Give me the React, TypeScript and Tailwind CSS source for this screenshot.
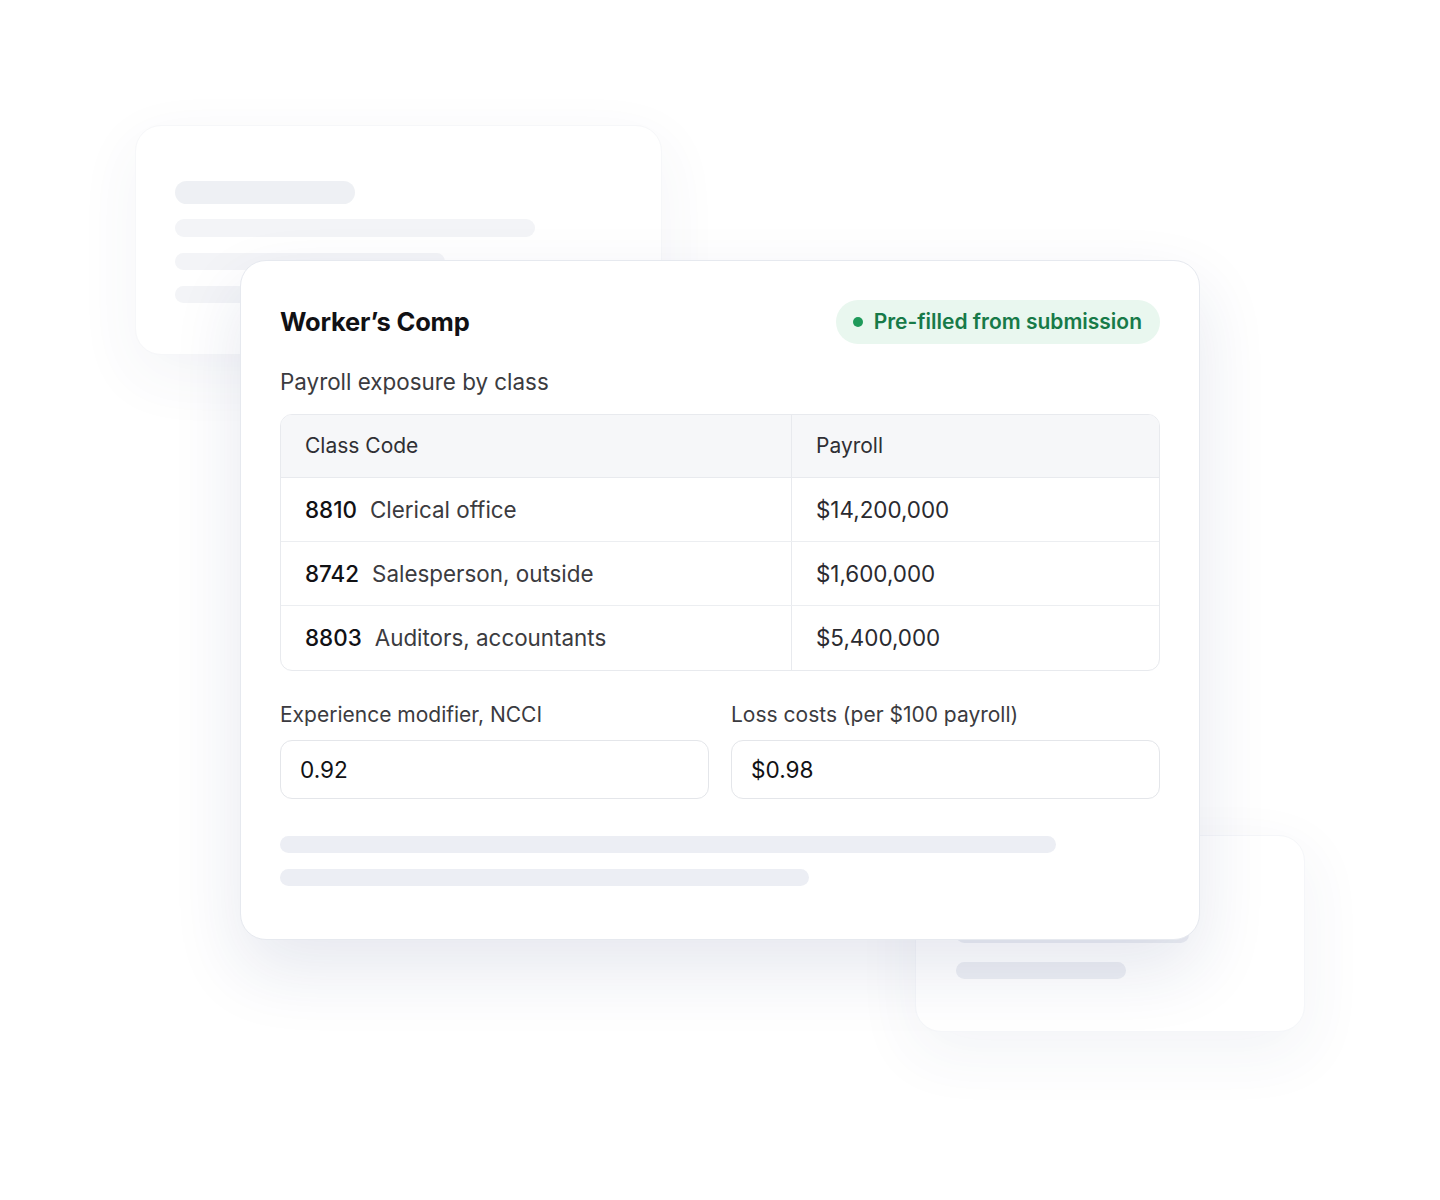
import React from "react";

const rows = [
  { code: "8810", name: "Clerical office", payroll: "$14,200,000" },
  { code: "8742", name: "Salesperson, outside", payroll: "$1,600,000" },
  { code: "8803", name: "Auditors, accountants", payroll: "$5,400,000" },
];

export default function App() {
  return (
    <div
      className="relative w-[1440px] h-[1200px] bg-white overflow-hidden"
      style={{ fontFamily: "Inter, 'Noto Sans', sans-serif" }}
    >
      {/* back card top-left */}
      <div className="absolute left-[135px] top-[125px] w-[527px] h-[230px] rounded-[26px] bg-white border border-[#f3f4f7] shadow-[0_20px_60px_rgba(40,60,120,0.07)] opacity-70 px-[39px] pt-[55px] flex flex-col">
        <div className="h-[23px] w-[180px] rounded-full bg-[#e8ebf0]" />
        <div className="mt-[15px] h-[18px] w-[360px] rounded-full bg-[#eef0f4]" />
        <div className="mt-[16px] h-[17px] w-[270px] rounded-full bg-[#eef0f4]" />
        <div className="mt-[16px] h-[17px] w-[200px] rounded-full bg-[#eef0f4]" />
      </div>

      {/* back card bottom-right */}
      <div className="absolute left-[915px] top-[835px] w-[390px] h-[197px] rounded-[26px] bg-white border border-[#f1f3f7] shadow-[0_20px_60px_rgba(40,60,120,0.08)] opacity-70 px-[40px] pt-[90px] flex flex-col">
        <div className="h-[17px] w-[233px] rounded-full bg-[#e6e9f0]" />
        <div className="mt-[19px] h-[17px] w-[170px] rounded-full bg-[#e6e9f0]" />
      </div>

      {/* main card */}
      <div className="absolute left-[240px] top-[260px] w-[960px] h-[680px] rounded-[26px] bg-white border border-[#e6e9ef] shadow-[0_30px_70px_rgba(30,50,110,0.11)] px-[39px] pt-[39px] flex flex-col">
        <div className="flex items-center justify-between h-[44px]">
          <h2 className="text-[25.5px] font-bold text-[#111114] tracking-[-0.2px]">Worker’s Comp</h2>
          <div className="h-[44px] rounded-full bg-[#e9f7ef] flex items-center pl-[17px] pr-[18px] gap-[11px]">
            <span className="w-[10px] h-[10px] rounded-full bg-[#1f9a5a]" />
            <span className="text-[21px] font-semibold text-[#177a48]">Pre-filled from submission</span>
          </div>
        </div>

        <div className="mt-[24px] text-[22.4px] leading-[28px] text-[#3b3b40]">Payroll exposure by class</div>

        <div className="mt-[18px] rounded-[12px] border border-[#e8eaee] overflow-hidden">
          <div className="flex h-[63px] bg-[#f6f7f9] border-b border-[#e8eaee] text-[21px] text-[#2f2f34]">
            <div className="w-[511px] border-r border-[#e8eaee] flex items-center pl-[24px]">Class Code</div>
            <div className="flex-1 flex items-center pl-[24px]">Payroll</div>
          </div>
          {rows.map((r, i) => (
            <div
              key={r.code}
              className={`flex h-[64px] text-[22.4px] ${i < rows.length - 1 ? "border-b border-[#eceef1]" : ""}`}
            >
              <div className="w-[511px] border-r border-[#e8eaee] flex items-center pl-[24px]">
                <span className="font-medium text-[#111114]">{r.code}</span>
                <span className="ml-[13px] text-[#3b3b40]">{r.name}</span>
              </div>
              <div className="flex-1 flex items-center pl-[24px] text-[#2a2a2f]">{r.payroll}</div>
            </div>
          ))}
        </div>

        <div className="mt-[30px] grid grid-cols-2 gap-[22px]">
          <div className="flex flex-col">
            <div className="text-[21px] leading-[28px] text-[#3b3b40]">Experience modifier, NCCI</div>
            <div className="mt-[11px] h-[59px] rounded-[12px] border border-[#e4e6ea] flex items-center pl-[19px] text-[22.6px] text-[#111114]">0.92</div>
          </div>
          <div className="flex flex-col">
            <div className="text-[21px] leading-[28px] text-[#3b3b40]">Loss costs (per $100 payroll)</div>
            <div className="mt-[11px] h-[59px] rounded-[12px] border border-[#e4e6ea] flex items-center pl-[19px] text-[22.6px] text-[#111114]">$0.98</div>
          </div>
        </div>

        <div className="mt-[37px] h-[17px] w-[776px] rounded-full bg-[#eceef4]" />
        <div className="mt-[16px] h-[17px] w-[529px] rounded-full bg-[#eceef4]" />
      </div>
    </div>
  );
}
